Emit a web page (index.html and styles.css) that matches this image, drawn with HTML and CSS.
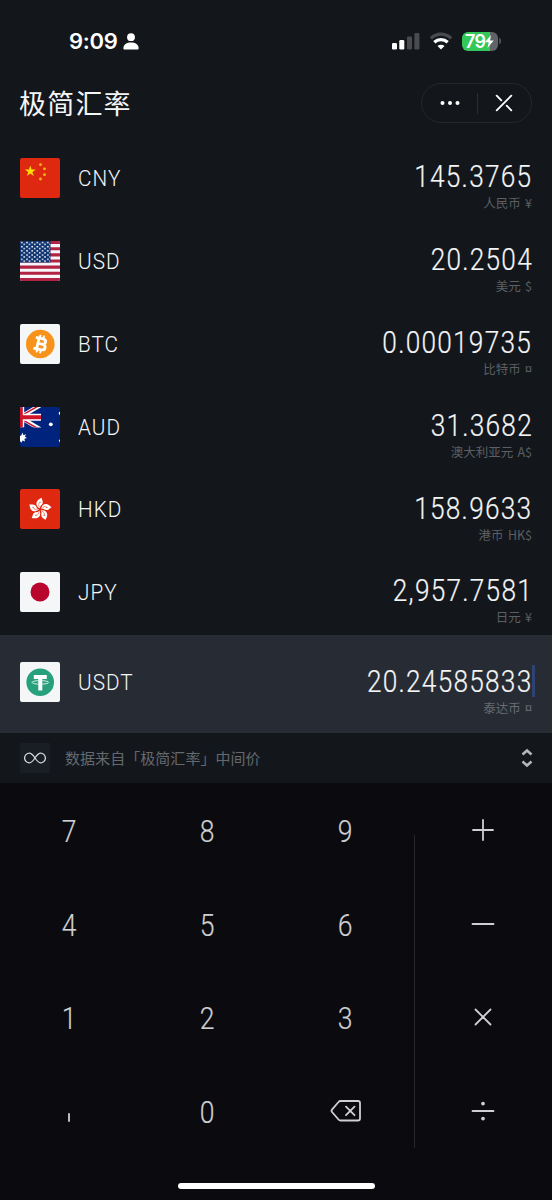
FILE: index.html
```html
<!DOCTYPE html>
<html lang="zh-CN">
<head>
<meta charset="utf-8">
<title>极简汇率</title>
<link rel="stylesheet" href="styles.css">
</head>
<body>
<div class="app">
  <div class="status">
    <div class="clock">9:09
      <svg width="16" height="17" viewBox="0 0 16 17"><circle cx="8" cy="4.2" r="3.9"/><path d="M.4 15.3C.4 11.500 3.700 9.600 8 9.600s7.600 1.900 7.600 5.700c0 .8-.4 1.200-1.200 1.200H1.600C.8 16.500.4 16.100.4 15.300z"/></svg>
    </div>
    <div class="signals">
      <svg width="29" height="18" viewBox="0 0 29 18"><rect x="1" y="11" width="5" height="6.500" rx="1.300" fill="#fff"/><rect x="8.300" y="8" width="5" height="9.500" rx="1.300" fill="#fff"/><rect x="16" y="4.500" width="5" height="13" rx="1.300" fill="#494b4f"/><rect x="23.400" y="1" width="5" height="16.500" rx="1.300" fill="#494b4f"/></svg>
      <svg class="wifi" width="24" height="18" viewBox="0 0 24 18" fill="none"><path d="M1.900 6.300C7.700.8 16.300.8 22.100 6.300" stroke="#494b4f" stroke-width="3.200"/><path d="M5.300 10.300c3.900-3.500 9.500-3.500 13.400 0" stroke="#fff" stroke-width="3.200"/><path d="M12 17.600 8.500 14c2-1.700 5-1.700 7 0z" fill="#fff"/></svg>
      <div class="battery"><span>79</span><svg width="9" height="13" viewBox="0 0 9 13"><path d="M6 0 0 7.300h3.700L2.500 13 8.700 5.500H5z" fill="#fff"/></svg></div><i class="battery-tip"></i>
    </div>
  </div>

  <header>
    <h1>极简汇率</h1>
    <div class="capsule">
      <svg width="20" height="6" viewBox="0 0 20 6" fill="#fff"><circle cx="2.500" cy="3" r="2"/><circle cx="10" cy="3" r="2"/><circle cx="17.500" cy="3" r="2"/></svg>
      <i></i>
      <svg width="18" height="18" viewBox="0 0 18 18" fill="none" stroke="#fff" stroke-width="1.900" stroke-linecap="round"><path d="M1.700 16.300 16.300 1.700M1.700 1.700l4.600 4.600M11.700 11.700l4.600 4.600"/></svg>
    </div>
  </header>

  <main>
    <section class="row">
      <svg class="flag" viewBox="0 0 40 40"><path fill="#de2910" d="M0 0h40v40H0z"/><path fill="#ffde00" d="m10.300 7.500 1.300 4h4.200l-3.400 2.400 1.300 4-3.400-2.400-3.400 2.400 1.300-4-3.400-2.400H9z"/><g fill="#f5b81c"><circle cx="20.500" cy="6.700" r="1.400"/><circle cx="24.500" cy="10.800" r="1.400"/><circle cx="24.500" cy="16.700" r="1.400"/><circle cx="20.500" cy="21" r="1.400"/></g></svg>
      <b>CNY</b><div class="amount"><strong><span>145.3765</span></strong><small>人民币 ¥</small></div>
    </section>
    <section class="row">
      <svg class="flag" viewBox="0 0 40 40"><defs><pattern id="stars" width="5.200" height="4.200" patternUnits="userSpaceOnUse"><circle cx="1.800" cy="1.500" r=".9" fill="#fff"/><circle cx="4.250" cy="3.300" r=".85" fill="#fff"/></pattern></defs><path fill="#f5f5fa" d="M0 0h40v40H0z"/><path stroke="#b22242" stroke-width="3.080" d="M0 1.540h40M0 7.700h40M0 13.850h40M0 20h40M0 26.150h40M0 32.300h40M0 38.460h40"/><path fill="#0f3470" d="M0 0h30.500v21.500H0z"/><path fill="url(#stars)" d="M0 0h30v21H0z"/></svg>
      <b>USD</b><div class="amount"><strong><span>20.2504</span></strong><small>美元 $</small></div>
    </section>
    <section class="row">
      <svg class="flag" viewBox="0 0 40 40"><path fill="#f4f6f8" d="M0 0h40v40H0z"/><circle cx="20.300" cy="20" r="14.300" fill="#f7931a"/><g transform="translate(20.300 20) rotate(13)" fill="none" stroke="#fff"><path stroke-width="2.800" d="M-2.500-6.200v12.400M-5.800-5.500H1.500c4.200 0 4.200 5.300 0 5.300h-4M1.500-.2c5.300 0 5.300 5.700 0 5.700h-7.300"/><path stroke-width="1.900" d="M-1.800-9v3M1.800-9v3M-1.800 5.500v3.500M1.800 5.500v3.500"/></g></svg>
      <b>BTC</b><div class="amount"><strong><span>0.00019735</span></strong><small>比特币 ¤</small></div>
    </section>
    <section class="row">
      <svg class="flag" viewBox="0 0 40 40"><path fill="#00247d" d="M0 0h40v40H0z"/><svg width="21" height="20.500" viewBox="0 0 21 20.500"><path stroke="#fff" stroke-width="4.200" d="m0 10.200 22-13M0 10.200l22 13"/><path stroke="#cf142b" stroke-width="1.500" d="m0 9.400 22-12.500M0 11.500l22 12.300"/><path stroke="#fff" stroke-width="7" d="M0 10.200h21"/><path fill="#fff" d="M0 0h4.200v20.500H0z"/><path stroke="#cf142b" stroke-width="4" d="M0 10.200h21"/><path fill="#cf142b" d="M0 0h2.800v20.500H0z"/></svg><path fill="#fff" d="m2.500 25.500.9 2.700 2.700-1-1.300 2.500 2.200 1.200-2.600.9.600 2.700-2.400-1-1.300 2.200L0 34v-5.500l1 .5zM38.700 6l.5-1 .8-.2v3l-1-.3zM38.800 33.500l1.200-1.200v3.200z"/><circle cx="30.800" cy="17.300" r="1.900" fill="#fff"/></svg>
      <b>AUD</b><div class="amount"><strong><span>31.3682</span></strong><small>澳大利亚元 A$</small></div>
    </section>
    <section class="row">
      <svg class="flag" viewBox="0 0 40 40"><defs><g id="petal"><path fill="#fff" d="M0-1.200C-3.500-2.800-4.500-6-2.700-8.600-1.500-10.400.5-10.900 1.800-11.700 1.400-10 3.500-8.500 2.600-6 2-4.200-.2-3.800 0-1.200z"/><path stroke="#de2910" stroke-width=".5" fill="none" d="M-.3-2.200C-1.800-4-1.600-5.600-.3-7"/><circle cx="0" cy="-7.200" r=".6" fill="#de2910"/></g></defs><path fill="#de2910" d="M0 0h40v40H0z"/><g transform="translate(20 20.500)"><use href="#petal"/><use href="#petal" transform="rotate(72)"/><use href="#petal" transform="rotate(144)"/><use href="#petal" transform="rotate(216)"/><use href="#petal" transform="rotate(288)"/></g></svg>
      <b>HKD</b><div class="amount"><strong><span>158.9633</span></strong><small>港币 HK$</small></div>
    </section>
    <section class="row">
      <svg class="flag" viewBox="0 0 40 40"><path fill="#f4f6f8" d="M0 0h40v40H0z"/><circle cx="20" cy="20" r="9.500" fill="#b9062f"/></svg>
      <b>JPY</b><div class="amount"><strong><span>2,957.7581</span></strong><small>日元 ¥</small></div>
    </section>
    <section class="row active">
      <svg class="flag" viewBox="0 0 40 40"><path fill="#f4f6f8" d="M0 0h40v40H0z"/><circle cx="20.200" cy="20.200" r="13.800" fill="#26a17b"/><path fill="#fff" d="M13.800 13h13v4h-4.500v11.500h-4V17h-4.500z"/><ellipse cx="20.300" cy="20.400" rx="8.300" ry="1.800" fill="none" stroke="#e6f5f0" stroke-width=".9"/></svg>
      <b>USDT</b><div class="amount"><strong><span>20.24585833</span><i class="caret"></i></strong><small>泰达币 ¤</small></div>
    </section>
  </main>

  <div class="source">
    <span class="logo"><svg width="22" height="12" viewBox="0 0 22 12" fill="none" stroke="#d5d7da" stroke-width="1.300"><path d="M11 6C9 3 7.700 1.200 5.400 1.200a4.800 4.800 0 0 0 0 9.600C7.700 10.800 9 9 11 6s3.300-4.800 5.600-4.800a4.800 4.800 0 0 1 0 9.600C14.300 10.800 13 9 11 6z"/></svg></span>
    <p>数据来自「极简汇率」中间价</p>
    <svg width="12" height="20" viewBox="0 0 12 20" fill="none" stroke="#b4b6b9" stroke-width="2.600"><path d="m1.500 6.500 4.500-4 4.500 4M1.500 13.500l4.500 4 4.500-4"/></svg>
  </div>

  <div class="pad">
    <div class="digits">
      <span>7</span><span>8</span><span>9</span>
      <span>4</span><span>5</span><span>6</span>
      <span>1</span><span>2</span><span>3</span>
      <span class="key-icon"><svg width="4" height="24" viewBox="0 0 4 24"><path d="M2 13v7"/></svg></span><span>0</span>
      <span class="key-icon"><svg class="erase" width="32" height="24" viewBox="0 0 32 24"><path d="M10.500 1h17.500q2 0 2 2v15.500q0 2-2 2H10.500q-1.200 0-2-1L2 12q-1-1.200 0-2.400L8.500 2q.8-1 2-1zM16 6.700l8.500 8.500M24.500 6.700 16 15.200"/></svg></span>
    </div>
    <div class="ops">
      <span class="key-icon"><svg width="24" height="24" viewBox="0 0 24 24"><path d="M2 12h20M12 2v20"/></svg></span>
      <span class="key-icon"><svg width="24" height="24" viewBox="0 0 24 24"><path d="M1.500 12h21"/></svg></span>
      <span class="key-icon"><svg width="24" height="24" viewBox="0 0 24 24"><path d="m4.500 4.500 15 15M19.500 4.500l-15 15"/></svg></span>
      <span class="key-icon"><svg width="24" height="24" viewBox="0 0 24 24"><path d="M1.500 12h21"/><circle cx="12" cy="4.600" r="1"/><circle cx="12" cy="19.600" r="1"/></svg></span>
    </div>
  </div>
  <div class="home"></div>
</div>
</body>
</html>
```

FILE: styles.css
```css
* { box-sizing: border-box; }
body { margin: 0; background: #0a0a0f; }
.app {
  width: 552px; height: 1200px; display: flex; flex-direction: column; overflow: hidden;
  background: #13171c; color: #f4f5f6;
  font-family: Roboto, "Noto Sans CJK SC", sans-serif;
}
svg { display: block; flex: none; }
.status { height: 73px; padding: 24px 51px 0 69px; display: flex; justify-content: space-between; align-items: flex-start; }
.clock { height: 34px; display: flex; align-items: center; gap: 6px; font: 600 22px/34px Inter, sans-serif; letter-spacing: -.3px; color: #fff; }
.clock svg { fill: #fff; }
.signals { height: 34px; display: flex; align-items: center; }
.wifi { margin: 0 9px 0 9px; }
.battery {
  width: 36px; height: 19px; border-radius: 6px; display: flex; align-items: center; padding-left: 3px;
  background: linear-gradient(90deg, #34c759 78%, #606367 78%);
}
.battery span { font: 600 18px/19px Inter, sans-serif; letter-spacing: -.7px; color: #fff; }
.battery-tip { width: 2px; height: 6px; margin-left: 1px; border-radius: 0 3px 3px 0; background: #4d5054; }
header { height: 63.600px; padding: 10px 20px 0 19px; display: flex; justify-content: space-between; align-items: flex-start; }
h1 { margin: 0; font: 400 27px/40px "Noto Sans CJK SC", sans-serif; letter-spacing: 1.2px; }
.capsule { width: 111px; height: 40px; padding: 0 18px; border: 1px solid #24282d; border-radius: 20px; display: flex; align-items: center; justify-content: space-between; }
.capsule i { width: 1px; height: 21px; background: #2a2e33; }
.row { height: 82.850px; padding: 0 20px; display: flex; align-items: center; }
.flag { width: 40px; height: 40px; border-radius: 2px; overflow: hidden; margin-right: 18px; }
.row b { font-size: 22.500px; font-weight: 300; letter-spacing: 1.100px; line-height: 30px; transform: scaleX(.92); transform-origin: left; }
.amount { margin-left: auto; padding-top: 16.500px; display: flex; flex-direction: column; align-items: flex-end; }
.amount strong { font-size: 30.500px; font-weight: 300; line-height: 34px; margin-right: -.5px; position: relative; }
.amount strong span { display: block; letter-spacing: 1.450px; transform: scaleX(.86); transform-origin: right; -webkit-text-stroke: .2px; }
.amount small { font-size: 12.500px; line-height: 18px; word-spacing: 1.500px; color: #5b5e63; font-family: "Noto Sans CJK SC", sans-serif; }
.active { height: 98px; margin-top: 1.300px; padding-bottom: 3px; background: #272b33; }
.active .amount small { color: #686c73; }
.caret { position: absolute; right: -2px; top: 0; width: 3px; height: 32px; background: #2e4373; }
.source { height: 50px; padding: 0 20px; display: flex; align-items: center; }
.logo { width: 30px; height: 30px; display: grid; place-items: center; background: #191d24; margin-right: 15px; }
.source p { margin: 0; flex: 1; font: 400 15px/24px "Noto Sans CJK SC", sans-serif; letter-spacing: .05px; color: #65686d; }
.source > svg { margin-right: -1px; }
.pad { flex: none; height: 376px; padding-top: 2px; display: flex; background: #0a0a0f; color: #ced0d3; }
.digits { width: 414px; display: grid; grid-template-columns: repeat(3, 138px); grid-template-rows: repeat(4, 93.600px); position: relative; }
.digits::after { content: ""; position: absolute; right: -1px; top: 50px; width: 1px; height: 313px; background: #26262b; }
.ops { width: 138px; display: grid; grid-template-rows: repeat(4, 93.600px); }
.pad span { display: grid; place-items: center; font-size: 30.500px; font-weight: 300; transform: scaleX(.87); -webkit-text-stroke: .2px; }
.pad .key-icon { transform: none; }
.pad svg { fill: none; stroke: #ced0d3; stroke-width: 1.800; stroke-linecap: round; stroke-linejoin: round; }
.pad .erase { margin: -1px 0 0 2px; }
.ops svg { margin-top: -3px; }
.ops circle { fill: #ced0d3; }
.home { flex: 1; background: #0a0a0f; display: flex; justify-content: center; padding-top: 24px; }
.home::before { content: ""; width: 197px; height: 6px; border-radius: 3px; background: #fff; }
```
